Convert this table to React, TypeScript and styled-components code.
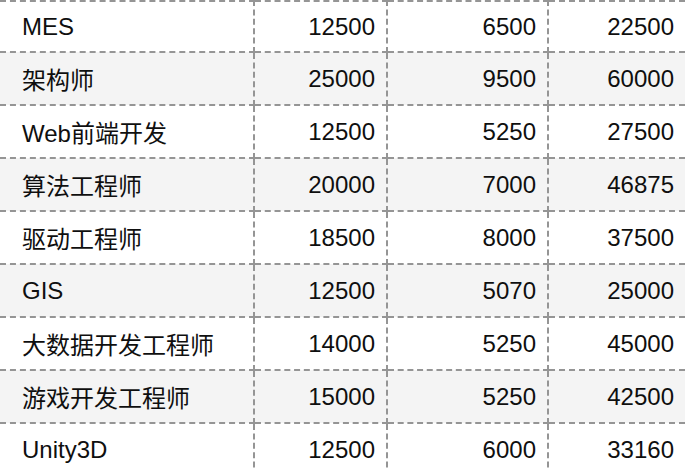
import styled, { createGlobalStyle } from 'styled-components';

const GlobalStyle = createGlobalStyle`
  html, body {
    margin: 0;
    padding: 0;
    background: #ffffff;
    overflow: hidden;
  }
`;

const Wrapper = styled.div`
  width: 700px;
  height: 470px;
  overflow: hidden;
  background: #ffffff;
`;

const Table = styled.table`
  width: 685px;
  border-collapse: collapse;
  table-layout: fixed;
  font-family: "Liberation Sans", "Noto Sans CJK SC", sans-serif;
  font-size: 24px;
  color: #0f0f0f;
`;

const Col = styled.col<{ w: number }>`
  width: ${({ w }) => w}px;
`;

const Row = styled.tr<{ striped: boolean; first: boolean }>`
  height: ${({ first }) => (first ? '51px' : '53px')};
  background-color: ${({ striped }) => (striped ? '#f4f4f4' : '#ffffff')};
`;

const NameCell = styled.td`
  padding: 0 0 0 22px;
  text-align: left;
  vertical-align: middle;
  white-space: nowrap;
  border-top: 2px dashed #959595;
  border-bottom: 2px dashed #959595;
  border-right: 2px dashed #959595;
`;

const NumCell = styled.td<{ last?: boolean }>`
  padding: 0 11px 0 0;
  text-align: right;
  vertical-align: middle;
  white-space: nowrap;
  border-top: 2px dashed #959595;
  border-bottom: 2px dashed #959595;
  border-right: ${({ last }) => (last ? 'none' : '2px dashed #959595')};
`;

const columns = [254, 133, 161, 137];

const rows = [
  { name: 'MES', a: 12500, b: 6500, c: 22500 },
  { name: '架构师', a: 25000, b: 9500, c: 60000 },
  { name: 'Web前端开发', a: 12500, b: 5250, c: 27500 },
  { name: '算法工程师', a: 20000, b: 7000, c: 46875 },
  { name: '驱动工程师', a: 18500, b: 8000, c: 37500 },
  { name: 'GIS', a: 12500, b: 5070, c: 25000 },
  { name: '大数据开发工程师', a: 14000, b: 5250, c: 45000 },
  { name: '游戏开发工程师', a: 15000, b: 5250, c: 42500 },
  { name: 'Unity3D', a: 12500, b: 6000, c: 33160 },
];

export default function App() {
  return (
    <Wrapper>
      <GlobalStyle />
      <Table>
        <colgroup>
          {columns.map((w, i) => (
            <Col key={i} w={w} />
          ))}
        </colgroup>
        <tbody>
          {rows.map((row, i) => (
            <Row key={row.name} striped={i % 2 === 1} first={i === 0}>
              <NameCell>{row.name}</NameCell>
              <NumCell>{row.a}</NumCell>
              <NumCell>{row.b}</NumCell>
              <NumCell last>{row.c}</NumCell>
            </Row>
          ))}
        </tbody>
      </Table>
    </Wrapper>
  );
};
